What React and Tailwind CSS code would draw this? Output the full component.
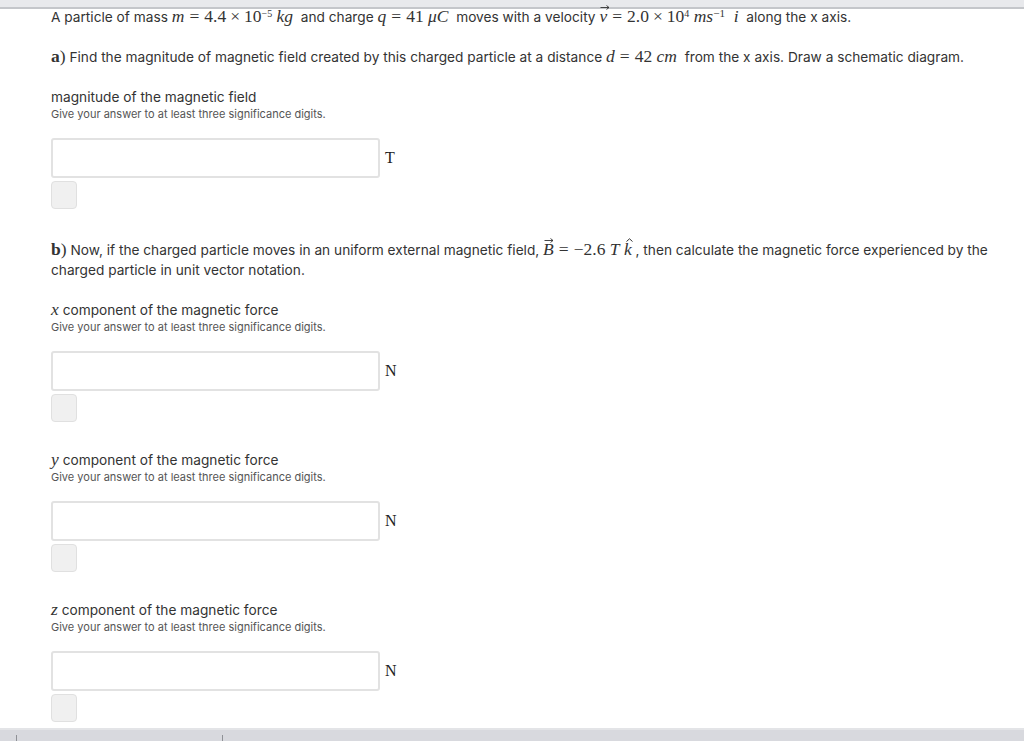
const serif = { fontFamily: '"Liberation Serif", "DejaVu Serif", serif' };

const M = ({ children, className = '' }) => (
  <span className={`text-[17.5px] leading-none ${className}`} style={serif}>
    {children}
  </span>
);

// relation / binary operator with KaTeX-like spacing
const Eq = () => <span className="mx-[5px]">=</span>;
const Times = () => <span className="mx-[4px]">×</span>;

const Vec = ({ children, hat }) => (
  <span className="relative inline-block">
    {hat ? (
      <svg className="absolute -top-[3px] left-[2px]" width="7" height="4" viewBox="0 0 7 4">
        <path d="M0.5 3.5 L3.5 0.8 L6.5 3.5" fill="none" stroke="#333" strokeWidth="1" />
      </svg>
    ) : (
      <svg className="absolute -top-[3px] left-[1px]" width="10" height="5" viewBox="0 0 10 5">
        <path d="M0.5 2.5 H9 M6.5 0.5 L9 2.5 L6.5 4.5" fill="none" stroke="#333" strokeWidth="0.9" />
      </svg>
    )}
    <i>{children}</i>
  </span>
);

const QUESTIONS = [{ label: 'magnitude of the magnetic field', unit: 'T', top: 'mt-[22px]' }];

const AnswerPart = ({ label, unit, className = '' }) => (
  <div className={className}>
    <p className="text-[13.7px] leading-[18px] text-[#333]">{label}</p>
    <p className="text-[11px] leading-[16px] text-[#555]">Give your answer to at least three significance digits.</p>
    <div className="mt-[16px] flex items-center">
      <div className="h-[40px] w-[329px] rounded-[3px] border-2 border-[#e2e2e2] bg-white" />
      <span className="ml-[5px] text-[16px] text-[#222]" style={serif}>
        {unit}
      </span>
    </div>
    <div className="mt-[3px] h-[28px] w-[26px] rounded-[4px] border border-[#e0e0e0] bg-[#f0f0f0]" />
  </div>
);

export default function App() {
  return (
    <div
      className="flex h-[741px] w-[1024px] flex-col overflow-hidden bg-white text-[#333]"
      style={{ fontFamily: 'Inter, "Liberation Sans", Arial, sans-serif' }}
    >
      <div className="h-[9px] shrink-0 border-b-2 border-[#c4c6ca] bg-[#e8e9ec]" />

      <div className="min-h-0 flex-1 pl-[51px]">
        <p className="mt-[-1px] whitespace-nowrap text-[13.7px] leading-[16px]">
          A particle of mass{' '}
          <M>
            <i>m</i><Eq />4.4<Times />10<sup className="text-[10px]">−5</sup> <i>kg</i>
          </M>
          &nbsp; and charge{' '}
          <M>
            <i>q</i><Eq />41 <i>μC</i>
          </M>
          &nbsp; moves with a velocity{' '}
          <M>
            <Vec>v</Vec><Eq />2.0<Times />10<sup className="text-[10px]">4</sup> <i>ms</i>
            <sup className="text-[11px]">−1</sup>&nbsp; <i>i</i>
          </M>
          &nbsp; along the x axis.
        </p>

        <p className="mt-[22px] whitespace-nowrap text-[13.7px] leading-[18px]">
          <M><b>a</b>)</M> Find the magnitude of magnetic field created by this charged particle at a distance{' '}
          <M>
            <i>d</i><Eq />42 <i>cm</i>
          </M>
          &nbsp; from the x axis. Draw a schematic diagram.
        </p>

        {QUESTIONS.map((q) => (
          <AnswerPart key={q.label} label={q.label} unit={q.unit} className={q.top} />
        ))}

        <div className="mt-[31px] w-[955px] text-[13.7px] leading-[20px]">
          <M><b>b</b>)</M> Now, if the charged particle moves in an uniform external magnetic field,{' '}
          <M>
            <Vec>B</Vec><Eq />−2.6 <i>T</i> <Vec hat>k</Vec>
          </M>{' '}
          , then calculate the magnetic force experienced by the charged particle in unit vector notation.
        </div>

        <AnswerPart
          className="mt-[21px]"
          unit="N"
          label={<><M><i>x</i></M> component of the magnetic force</>}
        />
        <AnswerPart
          className="mt-[29px]"
          unit="N"
          label={<><M><i>y</i></M> component of the magnetic force</>}
        />
        <AnswerPart
          className="mt-[29px]"
          unit="N"
          label={<><M><i>z</i></M> component of the magnetic force</>}
        />
      </div>

      <div className="flex h-[13px] shrink-0 items-end border-t-2 border-[#e3e4e7] bg-[#d8d9de]">
        <span className="ml-[16px] h-[6px] w-px bg-[#8f9196]" />
        <span className="ml-[205px] h-[6px] w-px bg-[#8f9196]" />
      </div>
    </div>
  );
}
